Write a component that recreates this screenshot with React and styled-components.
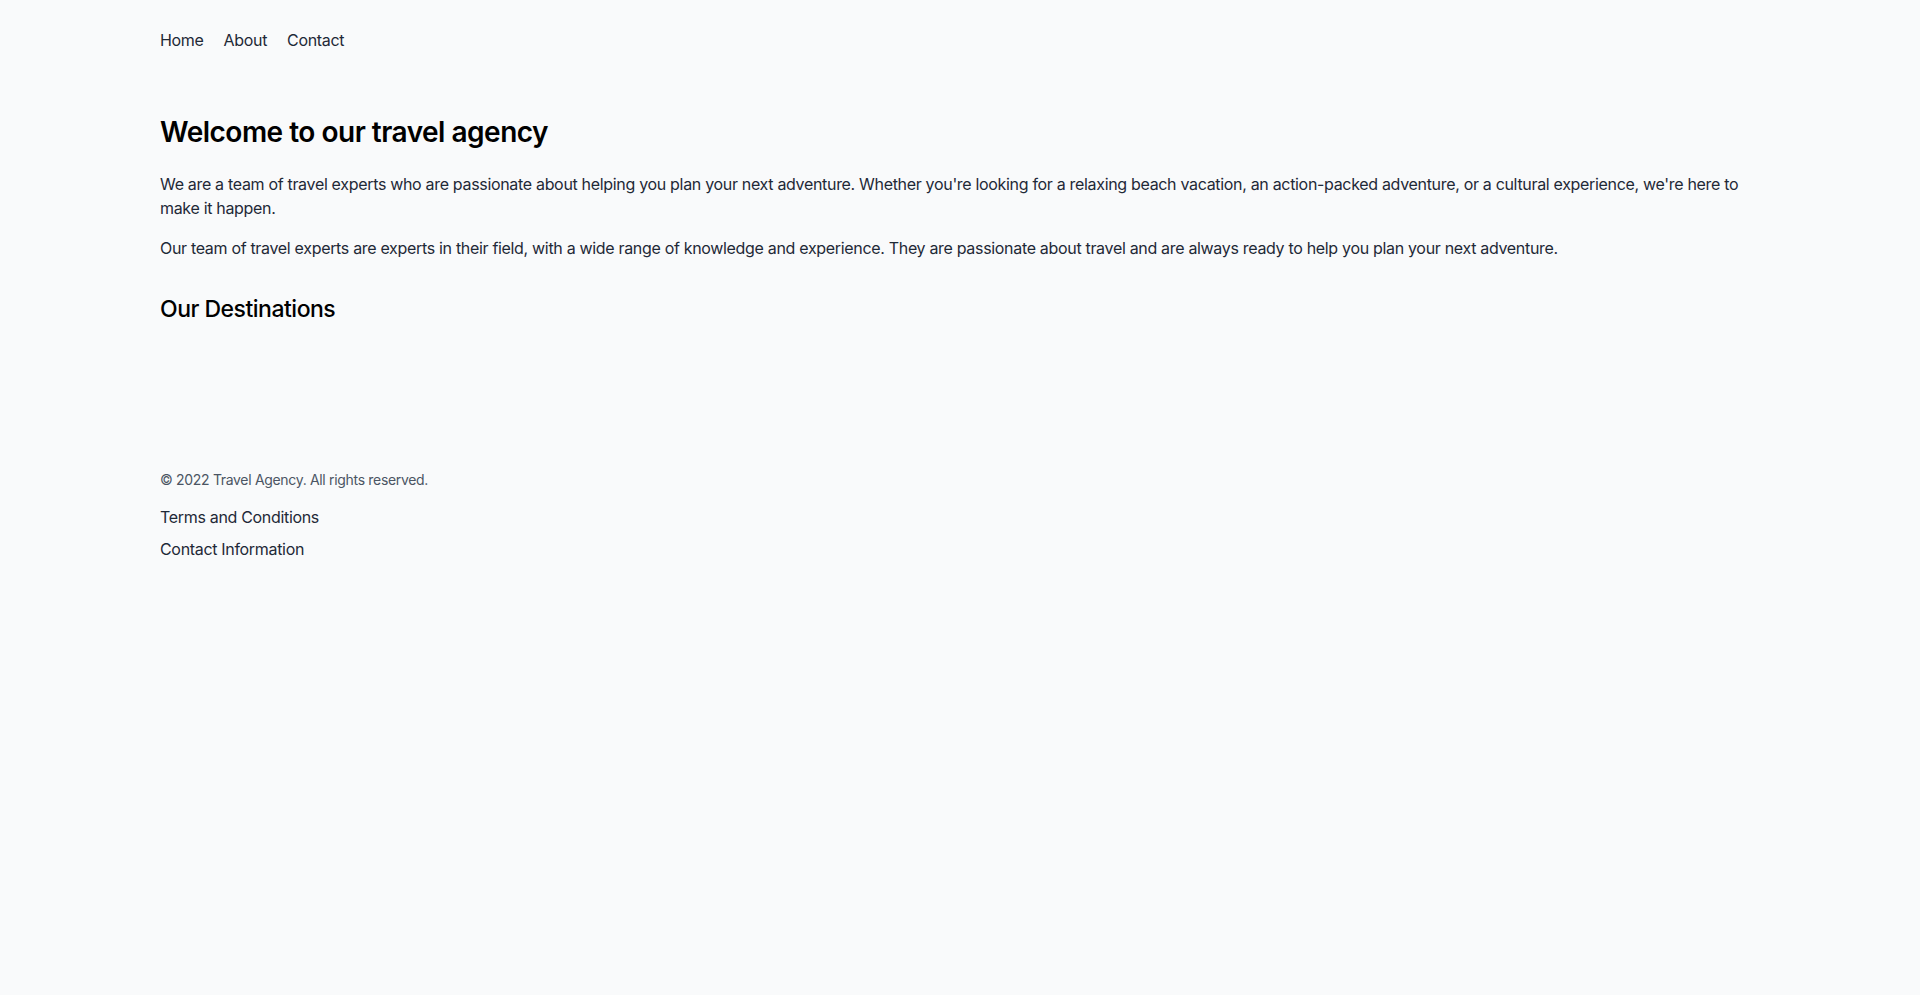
import React from 'react';
import styled, { createGlobalStyle } from 'styled-components';

const GlobalStyle = createGlobalStyle`
  * {
    box-sizing: border-box;
  }

  body {
    margin: 0;
    background-color: #f9fafb;
    color: #1f2937;
    font-family: Inter, "Noto Sans", "Liberation Sans", sans-serif;
    font-size: 16px;
    line-height: 24px;
    letter-spacing: -0.32px;
  }
`;

const Page = styled.div`
  min-height: 100vh;
  background-color: #f9fafb;
`;

const Container = styled.div`
  max-width: 1600px;
  margin: 0 auto;
`;

const NavBar = styled.nav`
  display: flex;
  gap: 20px;
  padding-top: 28px;
`;

const NavLink = styled.a`
  color: #1f2937;
  text-decoration: none;
  cursor: pointer;
`;

const Main = styled.main`
  padding-top: 62px;
`;

const Title = styled.h1`
  margin: 0 0 22px;
  font-size: 28px;
  line-height: 36px;
  font-weight: 600;
  letter-spacing: -0.5px;
  color: #000;
`;

const Paragraph = styled.p`
  margin: 0 0 16px;
`;

const SectionTitle = styled.h2`
  margin: 33px 0 0;
  font-size: 23px;
  line-height: 32px;
  font-weight: 500;
  letter-spacing: -0.5px;
  color: #000;
`;

const DestinationGrid = styled.div`
  display: grid;
  grid-template-columns: repeat(3, 1fr);
  gap: 24px;
  min-height: 145px;
`;

const Footer = styled.footer`
  display: flex;
  flex-direction: column;
`;

const Copyright = styled.p`
  margin: 0 0 15px;
  font-size: 14px;
  line-height: 20px;
  color: #4b5563;
`;

const FooterLinks = styled.ul`
  list-style: none;
  margin: 0;
  padding: 0;
  display: flex;
  flex-direction: column;
  gap: 8px;
`;

const FooterLink = styled.a`
  color: #1f2937;
  text-decoration: none;
  cursor: pointer;
`;

const navItems = ['Home', 'About', 'Contact'];
const footerItems = ['Terms and Conditions', 'Contact Information'];

const App = () => {
  return (
    <>
      <GlobalStyle />
      <Page>
        <Container>
          <NavBar>
            {navItems.map(item => (
              <NavLink key={item}>{item}</NavLink>
            ))}
          </NavBar>

          <Main>
            <Title>Welcome to our travel agency</Title>
            <Paragraph>
              We are a team of travel experts who are passionate about helping you plan your next adventure. Whether you're looking for a relaxing beach vacation, an action-packed adventure, or a cultural experience, we're here to make it happen.
            </Paragraph>
            <Paragraph>
              Our team of travel experts are experts in their field, with a wide range of knowledge and experience. They are passionate about travel and are always ready to help you plan your next adventure.
            </Paragraph>
            <SectionTitle>Our Destinations</SectionTitle>
            <DestinationGrid />
          </Main>

          <Footer>
            <Copyright>© 2022 Travel Agency. All rights reserved.</Copyright>
            <FooterLinks>
              {footerItems.map(item => (
                <li key={item}>
                  <FooterLink>{item}</FooterLink>
                </li>
              ))}
            </FooterLinks>
          </Footer>
        </Container>
      </Page>
    </>
  );
};

export default App;
